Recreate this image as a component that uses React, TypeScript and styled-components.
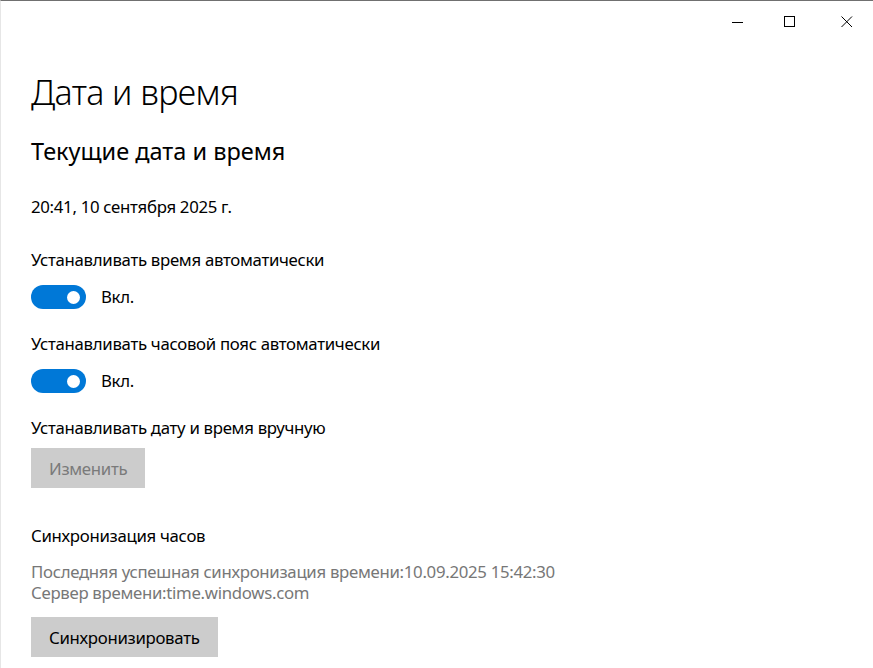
import React from "react"
import styled, { createGlobalStyle } from "styled-components"

const GlobalStyle = createGlobalStyle`
  html, body {
    margin: 0;
    padding: 0;
    background: #ffffff;
  }
  body {
    font-family: "Segoe UI", "Noto Sans", "Open Sans", sans-serif;
    color: #000000;
  }
`

const Window = styled.div`
  width: 873px;
  height: 668px;
  box-sizing: border-box;
  border-top: 1px solid #707070;
  border-left: 1px solid #e6e6e6;
  background: #ffffff;
  overflow: hidden;
  display: flex;
  flex-direction: column;
`

const TitleBar = styled.div`
  height: 42px;
  display: flex;
  justify-content: flex-end;
  flex-shrink: 0;
`

const CaptionButton = styled.div<{ $width: number }>`
  width: ${(p) => p.$width}px;
  height: 42px;
  display: flex;
  align-items: center;
  justify-content: center;
  color: #000000;
`

const Content = styled.div`
  padding: 0 0 0 30px;
  display: flex;
  flex-direction: column;
  align-items: flex-start;
`

const PageTitle = styled.h1`
  margin: 27px 0 0;
  font-size: 34px;
  font-weight: 300;
  line-height: 44px;
  letter-spacing: -0.6px;
`

const SectionTitle = styled.h2`
  margin: 21px 0 0;
  font-size: 23.5px;
  font-weight: 400;
  line-height: 32px;
`

const Text = styled.div<{ $muted?: boolean }>`
  font-size: 16.8px;
  line-height: ${(p) => (p.$muted ? "21px" : "22px")};
  letter-spacing: -0.3px;
  color: ${(p) => (p.$muted ? "#777777" : "#000000")};
`

const Block = styled.div<{ $top: number }>`
  margin-top: ${(p) => p.$top}px;
  display: flex;
  flex-direction: column;
  align-items: flex-start;
`

const ToggleRow = styled.div`
  margin-top: 14.5px;
  display: flex;
  align-items: center;
  gap: 15px;
`

const Track = styled.div`
  width: 55px;
  height: 24px;
  border-radius: 12px;
  background: #0078d7;
  display: flex;
  align-items: center;
  justify-content: flex-end;
  padding-right: 6px;
  box-sizing: border-box;
`

const Knob = styled.div`
  width: 13px;
  height: 13px;
  border-radius: 50%;
  background: #ffffff;
`

const Button = styled.button<{ $disabled?: boolean; $top: number }>`
  margin-top: ${(p) => p.$top}px;
  height: 40px;
  padding: 0 18px;
  border: none;
  background: #cccccc;
  font-family: inherit;
  font-size: 16.8px;
  letter-spacing: -0.3px;
  color: ${(p) => (p.$disabled ? "#7a7a7a" : "#000000")};
  cursor: default;
`

const Toggle = ({ label }: { label: string }) => (
  <ToggleRow>
    <Track>
      <Knob />
    </Track>
    <Text>{label}</Text>
  </ToggleRow>
)

export default function App() {
  return (
    <>
      <GlobalStyle />
      <Window>
        <TitleBar>
          <CaptionButton $width={42}>
            <svg width="12" height="12" viewBox="0 0 12 12">
              <line x1="0" y1="6.5" x2="11" y2="6.5" stroke="#000" strokeWidth="1" />
            </svg>
          </CaptionButton>
          <CaptionButton $width={62}>
            <svg width="12" height="12" viewBox="0 0 12 12">
              <rect x="0.5" y="0.5" width="10" height="10" fill="none" stroke="#000" strokeWidth="1" />
            </svg>
          </CaptionButton>
          <CaptionButton $width={52}>
            <svg width="12" height="12" viewBox="0 0 12 12">
              <path d="M0.5 0.5 L11 11 M11 0.5 L0.5 11" stroke="#000" strokeWidth="1" fill="none" />
            </svg>
          </CaptionButton>
        </TitleBar>
        <Content>
          <PageTitle>Дата и время</PageTitle>
          <SectionTitle>Текущие дата и время</SectionTitle>
          <Block $top={28.5}>
            <Text>20:41, 10 сентября 2025 г.</Text>
          </Block>
          <Block $top={31}>
            <Text>Устанавливать время автоматически</Text>
            <Toggle label="Вкл." />
          </Block>
          <Block $top={23.5}>
            <Text>Устанавливать часовой пояс автоматически</Text>
            <Toggle label="Вкл." />
          </Block>
          <Block $top={23.5}>
            <Text>Устанавливать дату и время вручную</Text>
            <Button $disabled $top={9.5}>
              Изменить
            </Button>
          </Block>
          <Block $top={36.5}>
            <Text>Синхронизация часов</Text>
            <Block $top={14.5}>
              <Text $muted>Последняя успешная синхронизация времени:10.09.2025 15:42:30</Text>
              <Text $muted>Сервер времени:time.windows.com</Text>
            </Block>
            <Button $top={14}>Синхронизировать</Button>
          </Block>
        </Content>
      </Window>
    </>
  )
}
